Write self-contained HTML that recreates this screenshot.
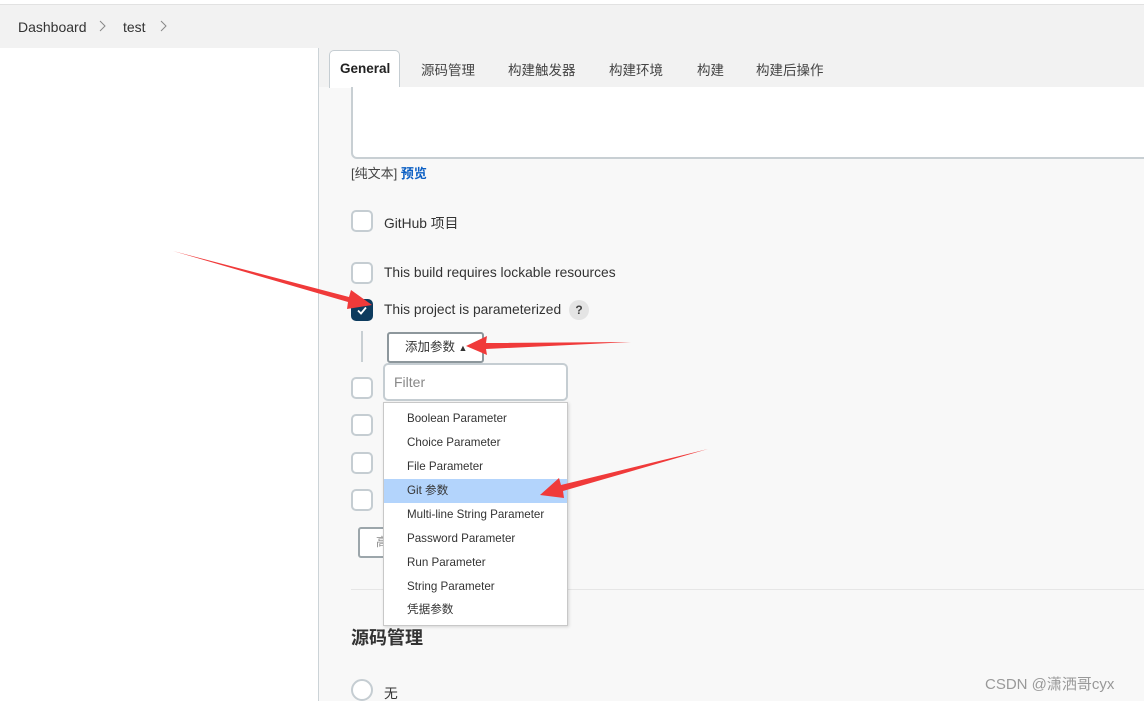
<!DOCTYPE html>
<html><head><meta charset="utf-8"><style>
*{box-sizing:border-box;margin:0;padding:0}
body{width:1144px;height:701px;overflow:hidden;background:#fff;font-family:"Liberation Sans","Noto Sans CJK SC",sans-serif;color:#333;position:relative}
.a{position:absolute}
.cb{position:absolute;left:351px;width:22px;height:22px;border:2px solid #c5cdd2;border-radius:5px;background:#fff}
.lbl{position:absolute;left:384px;font-size:13.8px;color:#333}
.tab{position:absolute;top:59px;font-size:13.5px;color:#444}
.it{position:absolute;left:384px;width:183px;height:24px;font-size:11.6px;padding-left:23px;line-height:24px;color:#333}
</style></head><body>
<div class="a" style="left:0;top:4px;width:1144px;height:44px;background:#f2f2f2;border-top:1px solid #e2e2e2"></div>
<div class="a" style="left:18px;top:19px;font-size:14px;color:#333">Dashboard</div>
<svg class="a" style="left:98px;top:20px" width="10" height="12"><path d="M2 1l5 5-5 5" stroke="#888" stroke-width="1" fill="none"/></svg>
<div class="a" style="left:123px;top:19px;font-size:14px;color:#333">test</div>
<svg class="a" style="left:159px;top:20px" width="10" height="12"><path d="M2 1l5 5-5 5" stroke="#888" stroke-width="1" fill="none"/></svg>
<div class="a" style="left:318px;top:48px;width:1px;height:653px;background:#ccd3d7"></div>
<div class="a" style="left:319px;top:48px;width:825px;height:653px;background:#f8f8f8"></div>
<div class="a" style="left:319px;top:48px;width:825px;height:39px;background:#f2f2f2"></div>
<div class="a" style="left:329px;top:50px;width:71px;height:38px;background:#fff;border:1px solid #c5cdd2;border-bottom:none;border-radius:5px 5px 0 0"></div>
<div class="tab" style="left:340px;top:61px;font-weight:bold;color:#222">General</div>
<div class="tab" style="left:421px">源码管理</div>
<div class="tab" style="left:508px">构建触发器</div>
<div class="tab" style="left:609px">构建环境</div>
<div class="tab" style="left:697px">构建</div>
<div class="tab" style="left:756px">构建后操作</div>
<div class="a" style="left:351px;top:87px;width:800px;height:72px;background:#fff;border:2px solid #c8cfd3;border-top:none;border-radius:0 0 0 6px"></div>
<div class="a" style="left:351px;top:163px;font-size:13px;color:#444">[纯文本] <span style="color:#0b5fc4;font-weight:bold">预览</span></div>
<div class="cb" style="top:210px"></div><div class="lbl" style="top:212px">GitHub 项目</div>
<div class="cb" style="top:262px"></div><div class="lbl" style="top:265px">This build requires lockable resources</div>
<div class="cb" style="top:299px;background:#0d3b5e;border-color:#0d3b5e"></div>
<svg class="a" style="left:355px;top:303px" width="14" height="14"><path d="M3 7.5l3 3 5-6" stroke="#fff" stroke-width="1.8" fill="none"/></svg>
<div class="lbl" style="top:302px">This project is parameterized</div>
<div class="a" style="left:569px;top:300px;width:20px;height:20px;border-radius:50%;background:#e4e4e4;font-size:12px;font-weight:bold;text-align:center;line-height:20px;color:#444">?</div>
<div class="a" style="left:361px;top:331px;width:2px;height:31px;background:#c8cfd3"></div>
<div class="a" style="left:387px;top:332px;width:97px;height:31px;border:2px solid #8d979c;border-radius:3px;background:#fff;font-size:12.5px;line-height:27px;padding-left:16px;color:#333">添加参数 <span style="font-size:9px">▲</span></div>
<div class="cb" style="top:377px"></div>
<div class="cb" style="top:414px"></div>
<div class="cb" style="top:452px"></div>
<div class="cb" style="top:489px"></div>
<div class="a" style="left:358px;top:527px;width:40px;height:31px;border:2px solid #9ca6ab;border-radius:3px;background:#fff;font-size:12px;color:#888;line-height:27px;padding-left:16px">高</div>
<div class="a" style="left:351px;top:589px;width:793px;height:1px;background:#e6e6e6"></div>
<div class="a" style="left:351px;top:624px;font-size:18px;font-weight:bold;color:#333">源码管理</div>
<div class="a" style="left:351px;top:679px;width:22px;height:22px;border:2px solid #c5cdd2;border-radius:50%;background:#fff"></div>
<div class="lbl" style="top:682px">无</div>
<div class="a" style="left:383px;top:363px;width:185px;height:38px;border:2px solid #c5cdd2;border-radius:5px;background:#fff;font-size:14px;color:#888;line-height:34px;padding-left:9px">Filter</div>
<div class="a" style="left:383px;top:402px;width:185px;height:224px;background:#fff;border:1px solid #c8c8c8;box-shadow:1px 1px 3px rgba(0,0,0,.15)"></div>
<div class="it" style="top:407px">Boolean Parameter</div>
<div class="it" style="top:431px">Choice Parameter</div>
<div class="it" style="top:455px">File Parameter</div>
<div class="it" style="top:479px;background:#b3d4fc">Git 参数</div>
<div class="it" style="top:503px">Multi-line String Parameter</div>
<div class="it" style="top:527px">Password Parameter</div>
<div class="it" style="top:551px">Run Parameter</div>
<div class="it" style="top:575px">String Parameter</div>
<div class="it" style="top:598px">凭据参数</div>
<svg class="a" style="left:0;top:0" width="1144" height="701">
<g fill="#f03a3a">
<polygon points="173,251 349,297 351,290 372,305 347,309 348,302"/>
<polygon points="631,342 486,343 487,336 466,346 487,355 486,349"/>
<polygon points="708,449 561,485 559,478 540,495 564,498 563,491"/>
</g></svg>
<div class="a" style="left:985px;top:673px;font-size:15px;color:#999">CSDN @潇洒哥cyx</div>
</body></html>
